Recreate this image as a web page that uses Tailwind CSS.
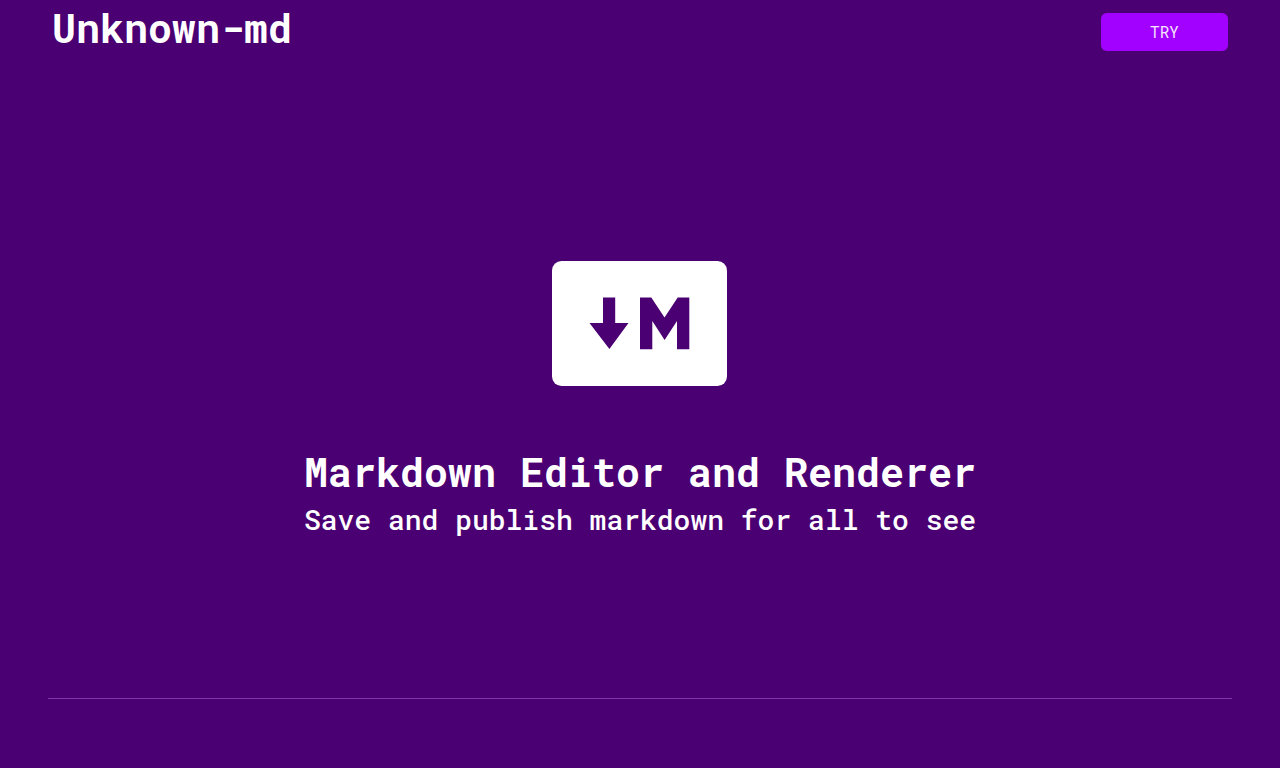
<!DOCTYPE html>
<html lang="en">
<head>
<meta charset="utf-8">
<meta name="viewport" content="width=device-width, initial-scale=1">
<title>Unknown-md</title>
<script src="https://cdn.jsdelivr.net/npm/@tailwindcss/browser@4"></script>
</head>
<body class="flex min-h-screen flex-col bg-[#4a0072] font-['Roboto_Mono','Liberation_Mono',monospace] text-white">
<header class="flex h-16 items-center justify-between px-[52px]">
  <h1 class="pb-2 text-[40px] leading-[48px] font-bold">Unknown-md</h1>
  <button type="button" class="h-[38px] w-[127px] rounded-md bg-[#a200ff] text-base text-white/90">TRY</button>
</header>
<main class="flex flex-1 flex-col items-center justify-center px-4 pt-[42px] text-center">
  <svg class="mb-[62px] w-[176px]" viewBox="0 0 176 125" role="img" aria-label="Markdown">
    <rect width="175" height="125" rx="9.5" fill="#fff"/>
    <path fill="#4a0072" d="M51 36.5h12.2V62h13.3L57.4 88 37.5 62H51zM88 36.5h11.3l13.2 20 13.2-20h11.6v51.8H125V60l-12.4 19L100.3 60v28.3H88z"/>
  </svg>
  <h2 class="text-[40px] leading-[48px] font-bold">Markdown Editor and Renderer</h2>
  <p class="text-[28px] leading-[48px] font-medium">Save and publish markdown for all to see</p>
</main>
<footer class="px-12 pb-[69px]">
  <hr class="border-[#8137a6]">
</footer>
</body>
</html>
